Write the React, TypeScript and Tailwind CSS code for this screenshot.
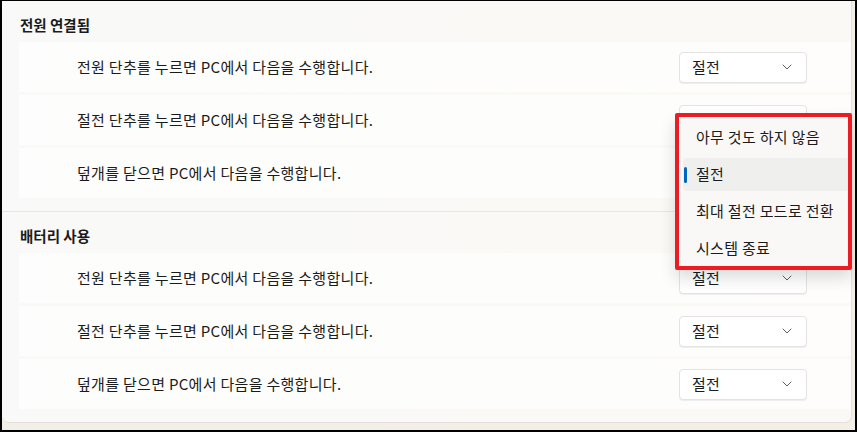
import React from "react";

// Power button & lid settings (Korean Windows 11 style)
const FONT = { fontFamily: '"Noto Sans CJK KR", "Noto Sans", sans-serif' };

const rowLabels = [
  "전원 단추를 누르면 PC에서 다음을 수행합니다.",
  "절전 단추를 누르면 PC에서 다음을 수행합니다.",
  "덮개를 닫으면 PC에서 다음을 수행합니다.",
];

const menuItems = ["아무 것도 하지 않음", "절전", "최대 절전 모드로 전환", "시스템 종료"];

const Chevron = () => (
  <svg width="10" height="6" viewBox="0 0 10 6" fill="none">
    <path d="M1 1l4 4 4-4" stroke="#5f5f5f" strokeWidth="1" strokeLinecap="round" strokeLinejoin="round" />
  </svg>
);

const Dropdown = () => (
  <div className="flex h-[31px] w-[128px] items-center justify-between rounded-[4px] border border-[#e3e3e3] bg-white pl-[12px] pr-[14px] text-[15px] tracking-[0.3px] text-[#1b1b1b] shadow-[0_1px_0_rgba(0,0,0,0.06)]">
    <span>절전</span>
    <Chevron />
  </div>
);

const Row = ({ label }: { label: string }) => (
  <div className="flex h-[50px] items-center justify-between bg-gradient-to-r from-[#fdfdfd] to-[#fefdfb] pl-[58px] pr-[44px]">
    <span className="text-[15px] tracking-[0.3px] text-[#1b1b1b]">{label}</span>
    <Dropdown />
  </div>
);

const Section = ({ title, last }: { title: string; last?: boolean }) => (
  <div className={`flex flex-col ${last ? "pb-[13px]" : "pb-[13px] border-b border-[#e6e6e6]"}`}>
    <div className="pl-[18px] pt-[14px] pb-[7px] text-[14.5px] font-bold leading-[20px] text-[#1b1b1b]">{title}</div>
    <div className="ml-[17px] flex flex-col gap-[3px]">
      {rowLabels.map((l) => (
        <Row key={l} label={l} />
      ))}
    </div>
  </div>
);

export default function App() {
  return (
    <div style={FONT} className="h-[432px] w-[857px] overflow-hidden border-t border-l-2 border-r-2 border-b-2 border-black bg-[#f4efe6]">
      <div className="relative mr-[3px] h-[422px] rounded-br-[7px] rounded-bl-[7px] border-r border-b border-[#e4e1dc] bg-gradient-to-r from-[#f9f9f9] to-[#fbf9f5]">
        <Section title="전원 연결됨" />
        <Section title="배터리 사용" last />

        {/* open dropdown menu, highlighted with a red frame */}
        <div className="absolute left-[673px] top-[112px] w-[177px] rounded-[2px] border-[4px] border-[#ec1c24] bg-[#f9f8f6] shadow-[0_8px_16px_rgba(0,0,0,0.14)]">
          <div className="flex flex-col gap-[4px] pt-[4px] pb-[1px] pl-[4px]">
            {menuItems.map((item) => {
              const selected = item === "절전";
              return (
                <div
                  key={item}
                  className={`relative flex h-[33px] items-center rounded-l-[4px] pl-[13px] text-[15px] tracking-[0.3px] text-[#1b1b1b] ${
                    selected ? "bg-[#efefed]" : ""
                  }`}
                >
                  {selected && (
                    <span className="absolute left-[1px] top-[9px] h-[16px] w-[3px] rounded-full bg-[#0067c0]" />
                  )}
                  {item}
                </div>
              );
            })}
          </div>
        </div>
      </div>
    </div>
  );
}
